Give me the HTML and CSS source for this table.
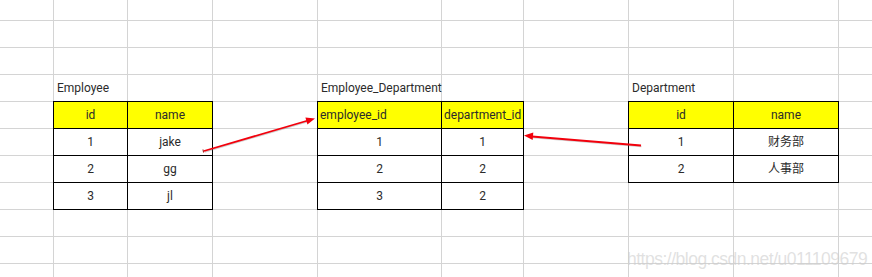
FILE: index.html
```html
<!DOCTYPE html>
<html>
<head>
<meta charset="utf-8">
<link rel="stylesheet" href="styles.css">
</head>
<body>
<div class="sheet">
  <div class="row"><div></div><div></div><div></div><div></div><div></div><div></div><div></div><div></div><div></div><div></div></div>
  <div class="row"><div></div><div></div><div></div><div></div><div></div><div></div><div></div><div></div><div></div><div></div></div>
  <div class="row"><div></div><div></div><div></div><div></div><div></div><div></div><div></div><div></div><div></div><div></div></div>
  <div class="row">
    <div></div><div class="title">Employee</div><div></div><div></div>
    <div class="title">Employee_Department</div><div></div><div></div>
    <div class="title">Department</div><div></div><div></div>
  </div>
  <div class="row">
    <div></div><div class="t hd">id</div><div class="t hd">name</div><div></div>
    <div class="t hd left">employee_id</div><div class="t hd left">department_id</div><div></div>
    <div class="t hd">id</div><div class="t hd">name</div><div></div>
  </div>
  <div class="row">
    <div></div><div class="t">1</div><div class="t">jake</div><div></div>
    <div class="t">1</div><div class="t">1</div><div></div>
    <div class="t">1</div><div class="t">财务部</div><div></div>
  </div>
  <div class="row">
    <div></div><div class="t">2</div><div class="t">gg</div><div></div>
    <div class="t">2</div><div class="t">2</div><div></div>
    <div class="t">2</div><div class="t">人事部</div><div></div>
  </div>
  <div class="row">
    <div></div><div class="t">3</div><div class="t">jl</div><div></div>
    <div class="t">3</div><div class="t">2</div><div></div>
    <div></div><div></div><div></div>
  </div>
  <div class="row"><div></div><div></div><div></div><div></div><div></div><div></div><div></div><div></div><div></div><div></div></div>
  <div class="row"><div></div><div></div><div></div><div></div><div></div><div></div><div></div><div></div><div></div><div></div></div>
  <div class="row"><div></div><div></div><div></div><div></div><div></div><div></div><div></div><div></div><div></div><div></div></div>
</div>
<svg class="arrows" width="872" height="277" viewBox="0 0 872 277">
  <g class="shadow">
    <line x1="204.5" y1="152" x2="308" y2="121.5"/>
    <line x1="641.5" y1="146.5" x2="532" y2="137.5"/>
  </g>
  <g class="arrow">
    <line x1="204" y1="151" x2="308" y2="120.5"/>
    <polygon points="315,118.5 307.4,124.4 305.4,117.6"/>
    <line x1="641" y1="145.5" x2="532" y2="136.5"/>
    <polygon points="524,135.5 533.3,132.6 532.7,140"/>
    <line class="tick" x1="203" y1="149.5" x2="203.5" y2="152.5"/>
  </g>
</svg>
<div class="watermark">https://blog.csdn.net/u011109679</div>
</body>
</html>
```
FILE: styles.css
```css
html, body {
  margin: 0;
  padding: 0;
  background: #ffffff;
  overflow: hidden;
}

body {
  width: 872px;
  height: 277px;
  position: relative;
  font-family: Roboto, "Noto Sans CJK SC", sans-serif;
  font-size: 12px;
  color: #2b2b2b;
}

.sheet {
  display: grid;
  grid-template-columns: 53px 73px 84px 104px 123px 81px 104px 104px 104px 1fr;
  grid-template-rows: 20px repeat(9, 26px) 13px;
  gap: 1px;
  background: #d4d4d4;
  width: 872px;
  height: 277px;
}

.row {
  display: contents;
}

.row > div {
  background: #ffffff;
  display: flex;
  align-items: center;
  justify-content: center;
  white-space: nowrap;
  line-height: 1;
}

.row > .title {
  justify-content: flex-start;
  padding-left: 3px;
  overflow: visible;
}

.row > .t {
  box-shadow: 0 0 0 1px #000000;
}

.row > .hd {
  background: #ffff00;
}

.row > .left {
  justify-content: flex-start;
  padding-left: 2px;
}

.arrows {
  position: absolute;
  left: 0;
  top: 0;
  pointer-events: none;
}

.arrows .shadow line {
  stroke: #6b6b6b;
  stroke-width: 1.5;
  opacity: 0.3;
}

.arrows .arrow line {
  stroke: #f2000c;
  stroke-width: 1.8;
}

.arrows .arrow polygon {
  fill: #f2000c;
}

.arrows .arrow .tick {
  stroke: #a00000;
  stroke-width: 1;
}

.watermark {
  position: absolute;
  left: 627px;
  top: 249px;
  font-family: "Liberation Sans", Arial, sans-serif;
  font-size: 17.5px;
  letter-spacing: -0.5px;
  color: rgba(205, 205, 205, 0.6);
  white-space: nowrap;
}
```
